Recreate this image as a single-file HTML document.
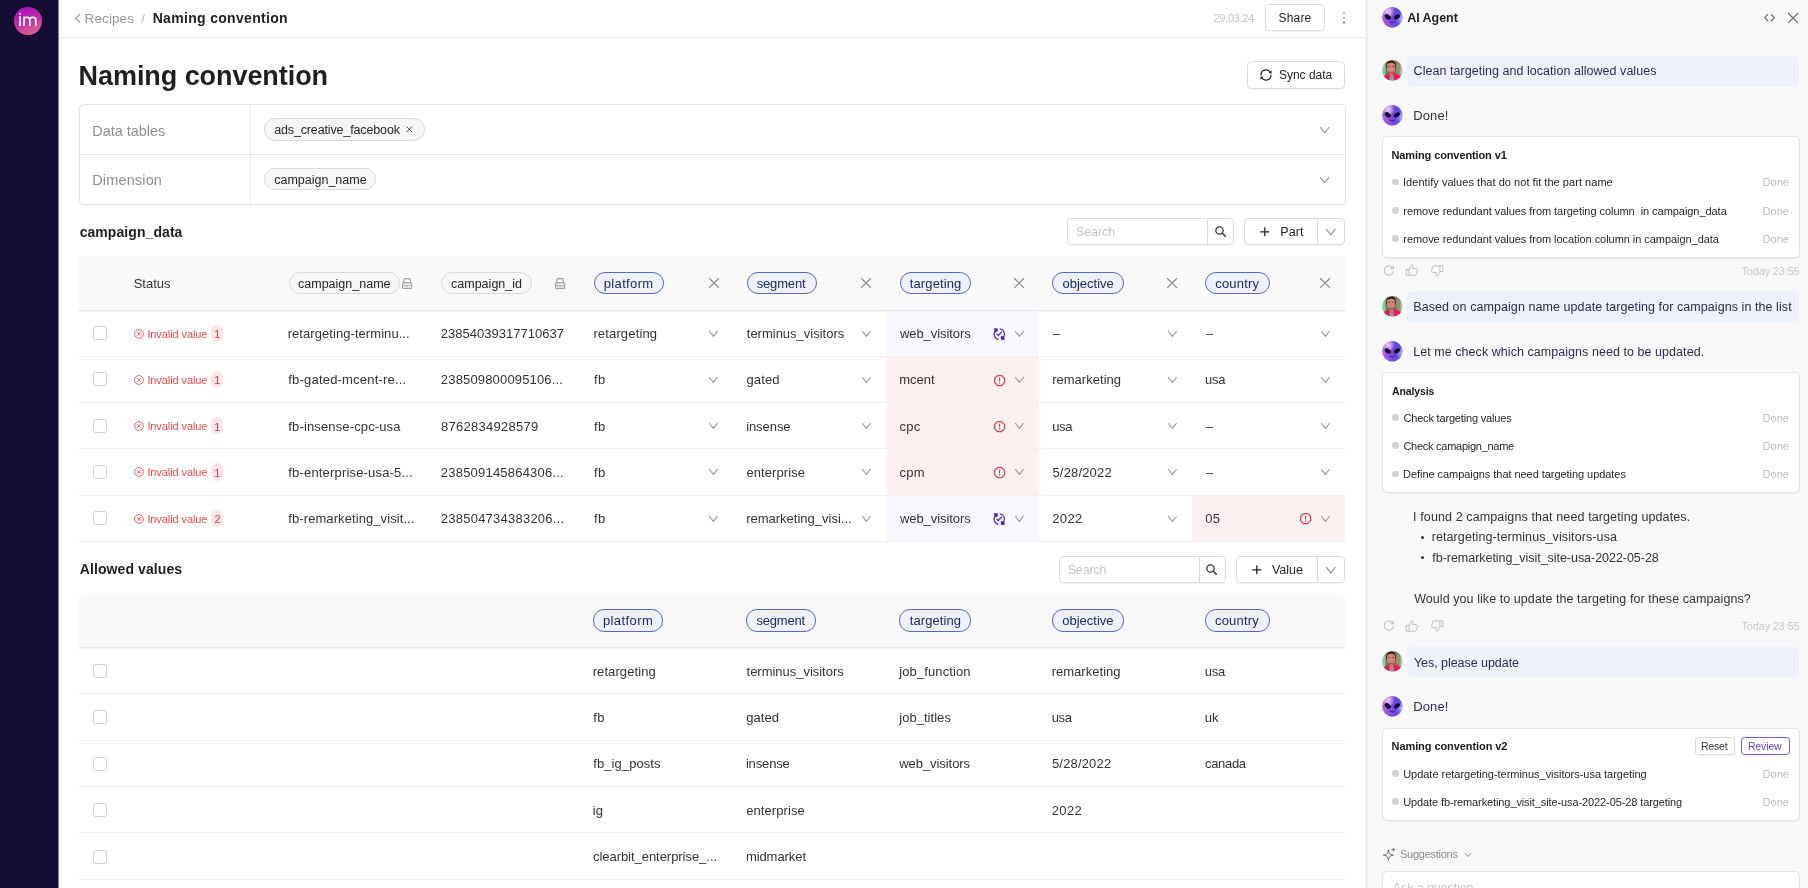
<!DOCTYPE html>
<html>
<head>
<meta charset="utf-8">
<title>Naming convention</title>
<style>
*{box-sizing:border-box;margin:0;padding:0}
html,body{width:1808px;height:888px;overflow:hidden;background:#fff}
body{font-family:"Liberation Sans",sans-serif;color:#1f1f1f;position:relative;font-size:13px;will-change:transform}
.abs{position:absolute}
.t{position:absolute;white-space:pre;line-height:1}
svg{display:block;overflow:visible}
/* sidebar */
#side{left:0;top:0;width:58px;height:888px;background:#150d33;border-right:1px solid #8a869a;width:59px}
#logo{left:13.9px;top:7.1px;width:27.9px;height:27.9px;border-radius:50%;background:linear-gradient(158deg,#aa10c6 0%,#b418b8 25%,#c83a9c 60%,#e87890 100%)}
/* header */
#hdr{left:59px;top:0;width:1306px;height:38px;border-bottom:1px solid #ebebee;background:#fff}
.btn{position:absolute;border:1px solid #dcdcdc;border-radius:4px;background:#fff;box-shadow:0 1px 1px rgba(0,0,0,.04)}
/* config box */
#cfg{left:79px;top:104px;width:1267px;height:101px;border:1px solid #e2e2e2;border-radius:4px;box-shadow:0 1px 2px rgba(0,0,0,.06);background:#fff}
.chipg{position:absolute;height:22px;border:1px solid #d9d9d9;border-radius:11px;background:#f6f6f6}
.chipb{position:absolute;height:22px;border:1.5px solid #5468cf;border-radius:11px;background:#eef1fc}
/* tables */
.thead{position:absolute;left:79px;width:1266px;background:#f9f9f9;border-bottom:1px solid #e9e9e9;box-shadow:0 1px 0 #f3f3f3;border-radius:4px 4px 0 0}
.rowline{position:absolute;left:79px;width:1266px;height:1px;background:#efefef}
.cb{position:absolute;left:93px;width:14px;height:14px;border:1px solid #cfcfcf;border-radius:3px;background:#fff}
.cell{color:#2b2b2b;font-size:13px}
/* panel */
#panel{left:1365px;top:0;width:443px;height:888px;background:linear-gradient(90deg,#f5f5f5 0,#f5f5f5 1px,#e8e8e8 1px,#e8e8e8 2px,#eeeeee 2px,#eeeeee 3px,#f8f8f8 3px)}
.bubble{position:absolute;left:1407px;width:392px;height:30px;border-radius:5px;background:#edf1fb}
.card{position:absolute;left:1382px;width:418px;border:1px solid #e3e3e3;border-radius:5px;background:#fff;box-shadow:0 1px 2px rgba(0,0,0,.05)}
.dot{position:absolute;left:1392px;width:6px;height:6px;border-radius:50%;background:#d4d4d4}
.done{position:absolute;white-space:nowrap;line-height:1;font-size:11px;color:#b5b5b5}
</style>
</head>
<body>
<!-- SIDEBAR -->
<div class="abs" id="side"></div>
<div class="abs" id="logo"></div>
<svg class="abs" style="left:18px;top:12px" width="20" height="15" viewBox="0 0 20 15" fill="none" stroke="#fff" stroke-width="1.65" stroke-linecap="butt"><path d="M2.05 4V13.9"/><circle cx="2.1" cy="1.8" r="1.05" fill="#fff" stroke="none"/><path d="M6.05 4.4V13.9M6.05 7.8C6.05 4.4 11.8 4.4 11.8 7.8V13.9M11.8 7.8C11.8 4.4 17.75 4.4 17.75 7.8V13.9"/></svg>

<!-- HEADER -->
<div class="abs" id="hdr"></div>
<svg class="abs" style="left:75.3px;top:13.6px" width="5.2" height="8.6" viewBox="0 0 5.2 8.6" ><path d="M4.5 0.6L0.8 4.3L4.5 8" fill="none" stroke="#979797" stroke-width="1.15" stroke-linecap="round" stroke-linejoin="round"/></svg>
<div class="t" style="left:84.59px;top:12px;font-size:13.5px;color:#959595;letter-spacing:0.103px;">Recipes</div>
<div class="t" style="left:141.30px;top:12px;font-size:13.5px;color:#b8b8b8;">/</div>
<div class="t" style="left:152.68px;top:11px;font-size:14px;color:#222;font-weight:700;letter-spacing:0.318px;">Naming convention</div>
<div class="t" style="left:1213.45px;top:13px;font-size:11px;color:#c6c6c6;letter-spacing:-0.278px;">29.03.24</div>
<div class="btn" style="left:1265px;top:4px;width:60px;height:27px;"></div>
<div class="t" style="left:1278.46px;top:12px;font-size:12px;color:#1f1f1f;letter-spacing:0.200px;">Share</div>
<div class="abs" style="left:1342.8px;top:11.5px;width:2.3px;height:2.3px;border-radius:50%;background:#9c9c9c"></div>
<div class="abs" style="left:1342.8px;top:16.5px;width:2.3px;height:2.3px;border-radius:50%;background:#9c9c9c"></div>
<div class="abs" style="left:1342.8px;top:21.4px;width:2.3px;height:2.3px;border-radius:50%;background:#9c9c9c"></div>
<div class="t" style="left:78.62px;top:63px;font-size:27px;color:#1f1f1f;font-weight:700;letter-spacing:-0.067px;">Naming convention</div>
<div class="btn" style="left:1247px;top:61px;width:98px;height:28px;"></div>
<svg class="abs" style="left:1259.7px;top:69px" width="12" height="12" viewBox="0 0 12 12" ><g fill="none" stroke="#222" stroke-width="1.2" stroke-linecap="round"><path d="M0.9 6A5.1 5.1 0 0 1 10.4 3.5"/><path d="M11.1 6A5.1 5.1 0 0 1 1.6 8.5"/></g><path d="M11.7 1.5L11.4 4.7L8.5 3.7Z" fill="#222"/><path d="M0.3 10.5L0.6 7.3L3.5 8.3Z" fill="#222"/></svg>
<div class="t" style="left:1278.96px;top:69px;font-size:12px;color:#1f1f1f;letter-spacing:-0.011px;">Sync data</div>
<div class="abs" id="cfg"></div>
<div class="abs" style="left:79.5px;top:154px;width:1266px;height:1px;background:#e6e6e6"></div>
<div class="abs" style="left:250px;top:105px;width:1px;height:99.5px;background:#ececec"></div>
<div class="t" style="left:92.21px;top:124px;font-size:14.5px;color:#8f8f8f;letter-spacing:-0.024px;">Data tables</div>
<div class="t" style="left:92.21px;top:173px;font-size:14.5px;color:#8f8f8f;letter-spacing:0.152px;">Dimension</div>
<div class="chipg" style="left:264.4px;top:118.4px;width:160.4px;height:22.3px;"></div>
<div class="t" style="left:274.18px;top:124px;font-size:12.5px;color:#262626;letter-spacing:-0.138px;">ads_creative_facebook</div>
<svg class="abs" style="left:405.7px;top:126.2px" width="6.6" height="6.6" viewBox="0 0 6.6 6.6" ><path d="M0.6 0.6L6 6M6 0.6L0.6 6" stroke="#444" stroke-width="0.95" fill="none"/></svg>
<div class="chipg" style="left:264.4px;top:168.2px;width:112px;height:22.3px;"></div>
<div class="t" style="left:274.18px;top:174px;font-size:12.5px;color:#262626;letter-spacing:0.005px;">campaign_name</div>
<svg class="abs" style="left:1320px;top:126.6px" width="9.4" height="6.2" viewBox="0 0 9.4 6.2" ><path d="M0.6 0.6L4.7 5.6L8.8 0.6" fill="none" stroke="#959595" stroke-width="1.15" stroke-linecap="round" stroke-linejoin="round"/></svg>
<svg class="abs" style="left:1320px;top:176.6px" width="9.4" height="6.2" viewBox="0 0 9.4 6.2" ><path d="M0.6 0.6L4.7 5.6L8.8 0.6" fill="none" stroke="#959595" stroke-width="1.15" stroke-linecap="round" stroke-linejoin="round"/></svg>

<div class="t" style="left:79.65px;top:225px;font-size:14px;color:#1f1f1f;font-weight:700;letter-spacing:0.069px;">campaign_data</div>
<div class="btn" style="left:1067.4px;top:218.2px;width:166.8px;height:26.8px;"></div><div class="abs" style="left:1207.3px;top:218.7px;width:1px;height:25.8px;background:#dcdcdc"></div><div class="t" style="left:1076.04px;top:226px;font-size:12.5px;color:#c6c6c6;letter-spacing:-0.108px;">Search</div><svg class="abs" style="left:1214.7px;top:226.2px" width="11.2" height="11.2" viewBox="0 0 11.2 11.2" ><circle cx="4.5" cy="4.5" r="3.7" fill="none" stroke="#3a3a3a" stroke-width="1.3"/><path d="M7.3 7.3L10.3 10.3" stroke="#3a3a3a" stroke-width="1.5" stroke-linecap="round"/></svg>
<div class="btn" style="left:1244.3px;top:218.2px;width:100.4px;height:26.8px;"></div><div class="abs" style="left:1317.3px;top:218.7px;width:1px;height:25.8px;background:#dcdcdc"></div><svg class="abs" style="left:1260.3px;top:226.8px" width="9.6" height="9.6" viewBox="0 0 9.6 9.6" ><path d="M4.8 0.3V9.3M0.3 4.8H9.3" stroke="#1f1f1f" stroke-width="1.25" fill="none"/></svg><div class="t" style="left:1280.27px;top:226px;font-size:12.5px;color:#1f1f1f;letter-spacing:0.062px;">Part</div><svg class="abs" style="left:1325.7px;top:228.7px" width="9.6" height="6.4" viewBox="0 0 9.6 6.4" ><path d="M0.5 0.5L4.8 5.9L9.1 0.5" fill="none" stroke="#8c8c8c" stroke-width="1.2" stroke-linecap="round" stroke-linejoin="round"/></svg>
<div class="thead" style="top:256px;height:54.5px"></div>
<div class="t" style="left:133.66px;top:277px;font-size:13px;color:#333;letter-spacing:-0.010px;">Status</div>
<div class="chipg" style="left:288.5px;top:272px;width:111.5px;height:22px;"></div><div class="t" style="left:297.98px;top:278px;font-size:12.5px;color:#262626;letter-spacing:0.014px;">campaign_name</div>
<svg class="abs" style="left:402px;top:277.8px" width="10.2" height="11" viewBox="0 0 10.2 11" ><g fill="none" stroke="#9f9f9f" stroke-width="1" stroke-linejoin="round"><path d="M1.9 4.9V2.2A1.6 1.6 0 0 1 3.5 0.6H6.7A1.6 1.6 0 0 1 8.3 2.2V4.9" stroke-width="1.15"/><rect x="0.55" y="4.9" width="9.1" height="5.5" rx="1" stroke-width="1.1"/><path d="M0.6 7.7H9.6" stroke-width="0.9"/></g><rect x="4.6" y="7.3" width="1" height="1.6" fill="#9f9f9f"/></svg>
<div class="chipg" style="left:441px;top:272px;width:90.75px;height:22px;"></div><div class="t" style="left:450.98px;top:278px;font-size:12.5px;color:#262626;letter-spacing:0.020px;">campaign_id</div>
<svg class="abs" style="left:554.9px;top:277.8px" width="10.2" height="11" viewBox="0 0 10.2 11" ><g fill="none" stroke="#9f9f9f" stroke-width="1" stroke-linejoin="round"><path d="M1.9 4.9V2.2A1.6 1.6 0 0 1 3.5 0.6H6.7A1.6 1.6 0 0 1 8.3 2.2V4.9" stroke-width="1.15"/><rect x="0.55" y="4.9" width="9.1" height="5.5" rx="1" stroke-width="1.1"/><path d="M0.6 7.7H9.6" stroke-width="0.9"/></g><rect x="4.6" y="7.3" width="1" height="1.6" fill="#9f9f9f"/></svg>
<div class="chipb" style="left:593.75px;top:272px;width:70px;height:22.2px;"></div><div class="t" style="left:603.77px;top:277px;font-size:13px;color:#1d2a6b;letter-spacing:0.346px;">platform</div>
<svg class="abs" style="left:708.5px;top:278.1px" width="10.2" height="10.2" viewBox="0 0 10.2 10.2" ><path d="M0.5 0.5L9.7 9.7M9.7 0.5L0.5 9.7" fill="none" stroke="#8a8a8a" stroke-width="1.15" stroke-linecap="round"/></svg>
<div class="chipb" style="left:746.5px;top:272px;width:70.25px;height:22.2px;"></div><div class="t" style="left:756.65px;top:277px;font-size:13px;color:#1d2a6b;letter-spacing:-0.154px;">segment</div>
<svg class="abs" style="left:861.4px;top:278.1px" width="10.2" height="10.2" viewBox="0 0 10.2 10.2" ><path d="M0.5 0.5L9.7 9.7M9.7 0.5L0.5 9.7" fill="none" stroke="#8a8a8a" stroke-width="1.15" stroke-linecap="round"/></svg>
<div class="chipb" style="left:899.5px;top:272px;width:71.5px;height:22.2px;"></div><div class="t" style="left:909.80px;top:277px;font-size:13px;color:#1d2a6b;letter-spacing:0.118px;">targeting</div>
<svg class="abs" style="left:1014.3px;top:278.1px" width="10.2" height="10.2" viewBox="0 0 10.2 10.2" ><path d="M0.5 0.5L9.7 9.7M9.7 0.5L0.5 9.7" fill="none" stroke="#8a8a8a" stroke-width="1.15" stroke-linecap="round"/></svg>
<div class="chipb" style="left:1052.25px;top:272px;width:71.75px;height:22.2px;"></div><div class="t" style="left:1062.45px;top:277px;font-size:13px;color:#1d2a6b;letter-spacing:0.007px;">objective</div>
<svg class="abs" style="left:1166.9px;top:278.1px" width="10.2" height="10.2" viewBox="0 0 10.2 10.2" ><path d="M0.5 0.5L9.7 9.7M9.7 0.5L0.5 9.7" fill="none" stroke="#8a8a8a" stroke-width="1.15" stroke-linecap="round"/></svg>
<div class="chipb" style="left:1205.25px;top:272px;width:64.75px;height:22.2px;"></div><div class="t" style="left:1215.20px;top:277px;font-size:13px;color:#1d2a6b;letter-spacing:0.199px;">country</div>
<svg class="abs" style="left:1319.9px;top:278.1px" width="10.2" height="10.2" viewBox="0 0 10.2 10.2" ><path d="M0.5 0.5L9.7 9.7M9.7 0.5L0.5 9.7" fill="none" stroke="#8a8a8a" stroke-width="1.15" stroke-linecap="round"/></svg>
<div class="abs" style="left:886px;top:310.5px;width:153px;height:46.05px;background:#f8f6fe;"></div>
<div class="abs" style="left:79px;top:356px;width:1266px;height:1px;background:#efefef"></div>
<div class="cb" style="top:326px"></div>
<svg class="abs" style="left:134.3px;top:328.68px" width="9.9" height="9.9" viewBox="0 0 9.9 9.9" ><circle cx="4.95" cy="4.95" r="4.4" fill="none" stroke="#f06468" stroke-width="1"/><path d="M3.35 3.35L6.550000000000001 6.550000000000001M6.550000000000001 3.35L3.35 6.550000000000001" stroke="#f06468" stroke-width="1" fill="none" stroke-linecap="round"/></svg>
<div class="t" style="left:147.39px;top:329px;font-size:11px;color:#ee4a4e;letter-spacing:-0.088px;">Invalid value</div>
<div class="abs" style="left:211px;top:324.52px;width:12px;height:17.3px;border-radius:6px;background:#fde4e5"></div>
<div class="t" style="left:214.16px;top:329px;font-size:11px;color:#cf4049;">1</div>
<div class="t" style="left:287.64px;top:327px;font-size:13px;color:#333333;letter-spacing:0.065px;">retargeting-terminu...</div>
<div class="t" style="left:440.85px;top:327px;font-size:13px;color:#333333;letter-spacing:0.008px;">23854039317710637</div>
<div class="t" style="left:593.39px;top:327px;font-size:13px;color:#333333;letter-spacing:0.154px;">retargeting</div>
<div class="t" style="left:746.80px;top:327px;font-size:13px;color:#333333;letter-spacing:-0.007px;">terminus_visitors</div>
<div class="t" style="left:900.00px;top:327px;font-size:13px;color:#333333;letter-spacing:-0.076px;">web_visitors</div>
<div class="t" style="left:1053.00px;top:327px;font-size:13px;color:#333333;">–</div>
<div class="t" style="left:1205.75px;top:327px;font-size:13px;color:#333333;">–</div>
<svg class="abs" style="left:709.2px;top:330.57px" width="8.8" height="5.9" viewBox="0 0 8.8 5.9" ><path d="M0.5 0.5L4.4 5.4L8.3 0.5" fill="none" stroke="#9a9a9a" stroke-width="1.2" stroke-linecap="round" stroke-linejoin="round"/></svg>
<svg class="abs" style="left:861.9px;top:330.57px" width="8.8" height="5.9" viewBox="0 0 8.8 5.9" ><path d="M0.5 0.5L4.4 5.4L8.3 0.5" fill="none" stroke="#9a9a9a" stroke-width="1.2" stroke-linecap="round" stroke-linejoin="round"/></svg>
<svg class="abs" style="left:1014.9px;top:330.57px" width="8.8" height="5.9" viewBox="0 0 8.8 5.9" ><path d="M0.5 0.5L4.4 5.4L8.3 0.5" fill="none" stroke="#9a9a9a" stroke-width="1.2" stroke-linecap="round" stroke-linejoin="round"/></svg>
<svg class="abs" style="left:1167.6px;top:330.57px" width="8.8" height="5.9" viewBox="0 0 8.8 5.9" ><path d="M0.5 0.5L4.4 5.4L8.3 0.5" fill="none" stroke="#9a9a9a" stroke-width="1.2" stroke-linecap="round" stroke-linejoin="round"/></svg>
<svg class="abs" style="left:1320.6px;top:330.57px" width="8.8" height="5.9" viewBox="0 0 8.8 5.9" ><path d="M0.5 0.5L4.4 5.4L8.3 0.5" fill="none" stroke="#9a9a9a" stroke-width="1.2" stroke-linecap="round" stroke-linejoin="round"/></svg>
<svg class="abs" style="left:993.35px;top:327.72px" width="12.7" height="12.2" viewBox="0 0 12.7 12.2" ><g fill="none" stroke="#5a34b8" stroke-width="1.3" stroke-linecap="round" stroke-linejoin="round"><path d="M1.96 3.3A5.3 5.3 0 0 0 4.93 11.3"/><path d="M7.22 0.9A5.3 5.3 0 0 1 10.2 9.6"/><path d="M3.9 6.2L5.4 7.5L8.5 4.2" stroke-width="1.35"/></g><path d="M1.2 0.5L4.7 0.8L4.3 3.3L1.9 3.9Z" fill="#4a1fa6" stroke="#4a1fa6" stroke-width="0.5" stroke-linejoin="round"/><path d="M8 8.6L10.6 8.3L11.6 11.4L8.2 11.7Z" fill="#4a1fa6" stroke="#4a1fa6" stroke-width="0.5" stroke-linejoin="round"/></svg>
<div class="abs" style="left:886px;top:356.75px;width:153px;height:46.05px;background:#fdf0f0;"></div>
<div class="abs" style="left:79px;top:402px;width:1266px;height:1px;background:#efefef"></div>
<div class="cb" style="top:372px"></div>
<svg class="abs" style="left:134.3px;top:374.93px" width="9.9" height="9.9" viewBox="0 0 9.9 9.9" ><circle cx="4.95" cy="4.95" r="4.4" fill="none" stroke="#f06468" stroke-width="1"/><path d="M3.35 3.35L6.550000000000001 6.550000000000001M6.550000000000001 3.35L3.35 6.550000000000001" stroke="#f06468" stroke-width="1" fill="none" stroke-linecap="round"/></svg>
<div class="t" style="left:147.39px;top:375px;font-size:11px;color:#ee4a4e;letter-spacing:-0.088px;">Invalid value</div>
<div class="abs" style="left:211px;top:370.77px;width:12px;height:17.3px;border-radius:6px;background:#fde4e5"></div>
<div class="t" style="left:214.16px;top:375px;font-size:11px;color:#cf4049;">1</div>
<div class="t" style="left:288.32px;top:373px;font-size:13px;color:#333333;letter-spacing:0.195px;">fb-gated-mcent-re...</div>
<div class="t" style="left:440.85px;top:373px;font-size:13px;color:#333333;letter-spacing:0.164px;">238509800095106...</div>
<div class="t" style="left:594.07px;top:373px;font-size:13px;color:#333333;letter-spacing:0.300px;">fb</div>
<div class="t" style="left:746.45px;top:373px;font-size:13px;color:#333333;letter-spacing:0.150px;">gated</div>
<div class="t" style="left:899.14px;top:373px;font-size:13px;color:#333333;letter-spacing:0.012px;">mcent</div>
<div class="t" style="left:1052.14px;top:373px;font-size:13px;color:#333333;letter-spacing:0.030px;">remarketing</div>
<div class="t" style="left:1204.92px;top:373px;font-size:13px;color:#333333;letter-spacing:-0.194px;">usa</div>
<svg class="abs" style="left:709.2px;top:376.82px" width="8.8" height="5.9" viewBox="0 0 8.8 5.9" ><path d="M0.5 0.5L4.4 5.4L8.3 0.5" fill="none" stroke="#9a9a9a" stroke-width="1.2" stroke-linecap="round" stroke-linejoin="round"/></svg>
<svg class="abs" style="left:861.9px;top:376.82px" width="8.8" height="5.9" viewBox="0 0 8.8 5.9" ><path d="M0.5 0.5L4.4 5.4L8.3 0.5" fill="none" stroke="#9a9a9a" stroke-width="1.2" stroke-linecap="round" stroke-linejoin="round"/></svg>
<svg class="abs" style="left:1014.9px;top:376.82px" width="8.8" height="5.9" viewBox="0 0 8.8 5.9" ><path d="M0.5 0.5L4.4 5.4L8.3 0.5" fill="none" stroke="#9a9a9a" stroke-width="1.2" stroke-linecap="round" stroke-linejoin="round"/></svg>
<svg class="abs" style="left:1167.6px;top:376.82px" width="8.8" height="5.9" viewBox="0 0 8.8 5.9" ><path d="M0.5 0.5L4.4 5.4L8.3 0.5" fill="none" stroke="#9a9a9a" stroke-width="1.2" stroke-linecap="round" stroke-linejoin="round"/></svg>
<svg class="abs" style="left:1320.6px;top:376.82px" width="8.8" height="5.9" viewBox="0 0 8.8 5.9" ><path d="M0.5 0.5L4.4 5.4L8.3 0.5" fill="none" stroke="#9a9a9a" stroke-width="1.2" stroke-linecap="round" stroke-linejoin="round"/></svg>
<svg class="abs" style="left:994.0px;top:374.67px" width="11.2" height="11.2" viewBox="0 0 11.2 11.2" ><polygon points="10.55,7.65 7.65,10.55 3.55,10.55 0.65,7.65 0.65,3.55 3.55,0.65 7.65,0.65 10.55,3.55" fill="#fff" fill-opacity="0.55" stroke="#de3f46" stroke-width="1.25" stroke-linejoin="round"/><path d="M5.6 3.0999999999999996V6.0" stroke="#de3f46" stroke-width="1.15" fill="none" stroke-linecap="round"/><circle cx="5.6" cy="8.05" r="0.72" fill="#de3f46"/></svg>
<div class="abs" style="left:886px;top:403.0px;width:153px;height:46.05px;background:#fdf0f0;"></div>
<div class="abs" style="left:79px;top:448px;width:1266px;height:1px;background:#efefef"></div>
<div class="cb" style="top:419px"></div>
<svg class="abs" style="left:134.3px;top:421.18px" width="9.9" height="9.9" viewBox="0 0 9.9 9.9" ><circle cx="4.95" cy="4.95" r="4.4" fill="none" stroke="#f06468" stroke-width="1"/><path d="M3.35 3.35L6.550000000000001 6.550000000000001M6.550000000000001 3.35L3.35 6.550000000000001" stroke="#f06468" stroke-width="1" fill="none" stroke-linecap="round"/></svg>
<div class="t" style="left:147.39px;top:421px;font-size:11px;color:#ee4a4e;letter-spacing:-0.088px;">Invalid value</div>
<div class="abs" style="left:211px;top:417.02px;width:12px;height:17.3px;border-radius:6px;background:#fde4e5"></div>
<div class="t" style="left:214.16px;top:422px;font-size:11px;color:#cf4049;">1</div>
<div class="t" style="left:288.32px;top:420px;font-size:13px;color:#333333;letter-spacing:0.138px;">fb-insense-cpc-usa</div>
<div class="t" style="left:440.94px;top:420px;font-size:13px;color:#333333;letter-spacing:0.265px;">8762834928579</div>
<div class="t" style="left:594.07px;top:420px;font-size:13px;color:#333333;letter-spacing:0.300px;">fb</div>
<div class="t" style="left:746.14px;top:420px;font-size:13px;color:#333333;letter-spacing:-0.064px;">insense</div>
<div class="t" style="left:899.45px;top:420px;font-size:13px;color:#333333;letter-spacing:0.300px;">cpc</div>
<div class="t" style="left:1052.17px;top:420px;font-size:13px;color:#333333;letter-spacing:-0.300px;">usa</div>
<div class="t" style="left:1205.75px;top:420px;font-size:13px;color:#333333;">–</div>
<svg class="abs" style="left:709.2px;top:423.07px" width="8.8" height="5.9" viewBox="0 0 8.8 5.9" ><path d="M0.5 0.5L4.4 5.4L8.3 0.5" fill="none" stroke="#9a9a9a" stroke-width="1.2" stroke-linecap="round" stroke-linejoin="round"/></svg>
<svg class="abs" style="left:861.9px;top:423.07px" width="8.8" height="5.9" viewBox="0 0 8.8 5.9" ><path d="M0.5 0.5L4.4 5.4L8.3 0.5" fill="none" stroke="#9a9a9a" stroke-width="1.2" stroke-linecap="round" stroke-linejoin="round"/></svg>
<svg class="abs" style="left:1014.9px;top:423.07px" width="8.8" height="5.9" viewBox="0 0 8.8 5.9" ><path d="M0.5 0.5L4.4 5.4L8.3 0.5" fill="none" stroke="#9a9a9a" stroke-width="1.2" stroke-linecap="round" stroke-linejoin="round"/></svg>
<svg class="abs" style="left:1167.6px;top:423.07px" width="8.8" height="5.9" viewBox="0 0 8.8 5.9" ><path d="M0.5 0.5L4.4 5.4L8.3 0.5" fill="none" stroke="#9a9a9a" stroke-width="1.2" stroke-linecap="round" stroke-linejoin="round"/></svg>
<svg class="abs" style="left:1320.6px;top:423.07px" width="8.8" height="5.9" viewBox="0 0 8.8 5.9" ><path d="M0.5 0.5L4.4 5.4L8.3 0.5" fill="none" stroke="#9a9a9a" stroke-width="1.2" stroke-linecap="round" stroke-linejoin="round"/></svg>
<svg class="abs" style="left:994.0px;top:420.92px" width="11.2" height="11.2" viewBox="0 0 11.2 11.2" ><polygon points="10.55,7.65 7.65,10.55 3.55,10.55 0.65,7.65 0.65,3.55 3.55,0.65 7.65,0.65 10.55,3.55" fill="#fff" fill-opacity="0.55" stroke="#de3f46" stroke-width="1.25" stroke-linejoin="round"/><path d="M5.6 3.0999999999999996V6.0" stroke="#de3f46" stroke-width="1.15" fill="none" stroke-linecap="round"/><circle cx="5.6" cy="8.05" r="0.72" fill="#de3f46"/></svg>
<div class="abs" style="left:886px;top:449.25px;width:153px;height:46.05px;background:#fdf0f0;"></div>
<div class="abs" style="left:79px;top:495px;width:1266px;height:1px;background:#efefef"></div>
<div class="cb" style="top:465px"></div>
<svg class="abs" style="left:134.3px;top:467.43px" width="9.9" height="9.9" viewBox="0 0 9.9 9.9" ><circle cx="4.95" cy="4.95" r="4.4" fill="none" stroke="#f06468" stroke-width="1"/><path d="M3.35 3.35L6.550000000000001 6.550000000000001M6.550000000000001 3.35L3.35 6.550000000000001" stroke="#f06468" stroke-width="1" fill="none" stroke-linecap="round"/></svg>
<div class="t" style="left:147.39px;top:467px;font-size:11px;color:#ee4a4e;letter-spacing:-0.088px;">Invalid value</div>
<div class="abs" style="left:211px;top:463.27px;width:12px;height:17.3px;border-radius:6px;background:#fde4e5"></div>
<div class="t" style="left:214.16px;top:468px;font-size:11px;color:#cf4049;">1</div>
<div class="t" style="left:288.32px;top:466px;font-size:13px;color:#333333;letter-spacing:0.176px;">fb-enterprise-usa-5...</div>
<div class="t" style="left:440.85px;top:466px;font-size:13px;color:#333333;letter-spacing:0.209px;">238509145864306...</div>
<div class="t" style="left:594.07px;top:466px;font-size:13px;color:#333333;letter-spacing:0.300px;">fb</div>
<div class="t" style="left:746.45px;top:466px;font-size:13px;color:#333333;letter-spacing:0.090px;">enterprise</div>
<div class="t" style="left:899.45px;top:466px;font-size:13px;color:#333333;letter-spacing:0.300px;">cpm</div>
<div class="t" style="left:1052.48px;top:466px;font-size:13px;color:#333333;letter-spacing:0.167px;">5/28/2022</div>
<div class="t" style="left:1205.75px;top:466px;font-size:13px;color:#333333;">–</div>
<svg class="abs" style="left:709.2px;top:469.32px" width="8.8" height="5.9" viewBox="0 0 8.8 5.9" ><path d="M0.5 0.5L4.4 5.4L8.3 0.5" fill="none" stroke="#9a9a9a" stroke-width="1.2" stroke-linecap="round" stroke-linejoin="round"/></svg>
<svg class="abs" style="left:861.9px;top:469.32px" width="8.8" height="5.9" viewBox="0 0 8.8 5.9" ><path d="M0.5 0.5L4.4 5.4L8.3 0.5" fill="none" stroke="#9a9a9a" stroke-width="1.2" stroke-linecap="round" stroke-linejoin="round"/></svg>
<svg class="abs" style="left:1014.9px;top:469.32px" width="8.8" height="5.9" viewBox="0 0 8.8 5.9" ><path d="M0.5 0.5L4.4 5.4L8.3 0.5" fill="none" stroke="#9a9a9a" stroke-width="1.2" stroke-linecap="round" stroke-linejoin="round"/></svg>
<svg class="abs" style="left:1167.6px;top:469.32px" width="8.8" height="5.9" viewBox="0 0 8.8 5.9" ><path d="M0.5 0.5L4.4 5.4L8.3 0.5" fill="none" stroke="#9a9a9a" stroke-width="1.2" stroke-linecap="round" stroke-linejoin="round"/></svg>
<svg class="abs" style="left:1320.6px;top:469.32px" width="8.8" height="5.9" viewBox="0 0 8.8 5.9" ><path d="M0.5 0.5L4.4 5.4L8.3 0.5" fill="none" stroke="#9a9a9a" stroke-width="1.2" stroke-linecap="round" stroke-linejoin="round"/></svg>
<svg class="abs" style="left:994.0px;top:467.17px" width="11.2" height="11.2" viewBox="0 0 11.2 11.2" ><polygon points="10.55,7.65 7.65,10.55 3.55,10.55 0.65,7.65 0.65,3.55 3.55,0.65 7.65,0.65 10.55,3.55" fill="#fff" fill-opacity="0.55" stroke="#de3f46" stroke-width="1.25" stroke-linejoin="round"/><path d="M5.6 3.0999999999999996V6.0" stroke="#de3f46" stroke-width="1.15" fill="none" stroke-linecap="round"/><circle cx="5.6" cy="8.05" r="0.72" fill="#de3f46"/></svg>
<div class="abs" style="left:886px;top:495.5px;width:153px;height:46.05px;background:#f8f6fe;"></div>
<div class="abs" style="left:1192px;top:495.5px;width:152.8px;height:46.05px;background:#fdf0f0;border-radius:0 0 4px 0;"></div>
<div class="abs" style="left:79px;top:541px;width:1266px;height:1px;background:#efefef"></div>
<div class="cb" style="top:511px"></div>
<svg class="abs" style="left:134.3px;top:513.67px" width="9.9" height="9.9" viewBox="0 0 9.9 9.9" ><circle cx="4.95" cy="4.95" r="4.4" fill="none" stroke="#f06468" stroke-width="1"/><path d="M3.35 3.35L6.550000000000001 6.550000000000001M6.550000000000001 3.35L3.35 6.550000000000001" stroke="#f06468" stroke-width="1" fill="none" stroke-linecap="round"/></svg>
<div class="t" style="left:147.39px;top:514px;font-size:11px;color:#ee4a4e;letter-spacing:-0.088px;">Invalid value</div>
<div class="abs" style="left:211px;top:509.52px;width:12px;height:17.3px;border-radius:6px;background:#fde4e5"></div>
<div class="t" style="left:214.45px;top:514px;font-size:11px;color:#cf4049;">2</div>
<div class="t" style="left:288.32px;top:512px;font-size:13px;color:#333333;letter-spacing:0.082px;">fb-remarketing_visit...</div>
<div class="t" style="left:440.85px;top:512px;font-size:13px;color:#333333;letter-spacing:0.232px;">238504734383206...</div>
<div class="t" style="left:594.07px;top:512px;font-size:13px;color:#333333;letter-spacing:0.300px;">fb</div>
<div class="t" style="left:746.14px;top:512px;font-size:13px;color:#333333;">remarketing_visi...</div>
<div class="t" style="left:900.00px;top:512px;font-size:13px;color:#333333;letter-spacing:-0.076px;">web_visitors</div>
<div class="t" style="left:1052.35px;top:512px;font-size:13px;color:#333333;letter-spacing:0.296px;">2022</div>
<div class="t" style="left:1205.24px;top:512px;font-size:13px;color:#333333;letter-spacing:0.300px;">05</div>
<svg class="abs" style="left:709.2px;top:515.57px" width="8.8" height="5.9" viewBox="0 0 8.8 5.9" ><path d="M0.5 0.5L4.4 5.4L8.3 0.5" fill="none" stroke="#9a9a9a" stroke-width="1.2" stroke-linecap="round" stroke-linejoin="round"/></svg>
<svg class="abs" style="left:861.9px;top:515.57px" width="8.8" height="5.9" viewBox="0 0 8.8 5.9" ><path d="M0.5 0.5L4.4 5.4L8.3 0.5" fill="none" stroke="#9a9a9a" stroke-width="1.2" stroke-linecap="round" stroke-linejoin="round"/></svg>
<svg class="abs" style="left:1014.9px;top:515.57px" width="8.8" height="5.9" viewBox="0 0 8.8 5.9" ><path d="M0.5 0.5L4.4 5.4L8.3 0.5" fill="none" stroke="#9a9a9a" stroke-width="1.2" stroke-linecap="round" stroke-linejoin="round"/></svg>
<svg class="abs" style="left:1167.6px;top:515.57px" width="8.8" height="5.9" viewBox="0 0 8.8 5.9" ><path d="M0.5 0.5L4.4 5.4L8.3 0.5" fill="none" stroke="#9a9a9a" stroke-width="1.2" stroke-linecap="round" stroke-linejoin="round"/></svg>
<svg class="abs" style="left:1320.6px;top:515.57px" width="8.8" height="5.9" viewBox="0 0 8.8 5.9" ><path d="M0.5 0.5L4.4 5.4L8.3 0.5" fill="none" stroke="#9a9a9a" stroke-width="1.2" stroke-linecap="round" stroke-linejoin="round"/></svg>
<svg class="abs" style="left:993.35px;top:512.73px" width="12.7" height="12.2" viewBox="0 0 12.7 12.2" ><g fill="none" stroke="#5a34b8" stroke-width="1.3" stroke-linecap="round" stroke-linejoin="round"><path d="M1.96 3.3A5.3 5.3 0 0 0 4.93 11.3"/><path d="M7.22 0.9A5.3 5.3 0 0 1 10.2 9.6"/><path d="M3.9 6.2L5.4 7.5L8.5 4.2" stroke-width="1.35"/></g><path d="M1.2 0.5L4.7 0.8L4.3 3.3L1.9 3.9Z" fill="#4a1fa6" stroke="#4a1fa6" stroke-width="0.5" stroke-linejoin="round"/><path d="M8 8.6L10.6 8.3L11.6 11.4L8.2 11.7Z" fill="#4a1fa6" stroke="#4a1fa6" stroke-width="0.5" stroke-linejoin="round"/></svg>
<svg class="abs" style="left:1299.7px;top:513.42px" width="11.2" height="11.2" viewBox="0 0 11.2 11.2" ><polygon points="10.55,7.65 7.65,10.55 3.55,10.55 0.65,7.65 0.65,3.55 3.55,0.65 7.65,0.65 10.55,3.55" fill="#fff" fill-opacity="0.55" stroke="#de3f46" stroke-width="1.25" stroke-linejoin="round"/><path d="M5.6 3.0999999999999996V6.0" stroke="#de3f46" stroke-width="1.15" fill="none" stroke-linecap="round"/><circle cx="5.6" cy="8.05" r="0.72" fill="#de3f46"/></svg>
<div class="t" style="left:79.76px;top:562px;font-size:14px;color:#1f1f1f;font-weight:700;letter-spacing:0.089px;">Allowed values</div>
<div class="btn" style="left:1059px;top:556.2px;width:166.6px;height:26.8px;"></div><div class="abs" style="left:1198.5px;top:556.7px;width:1px;height:25.8px;background:#dcdcdc"></div><div class="t" style="left:1067.69px;top:564px;font-size:12.5px;color:#c6c6c6;letter-spacing:-0.168px;">Search</div><svg class="abs" style="left:1206.4px;top:564.0px" width="11.2" height="11.2" viewBox="0 0 11.2 11.2" ><circle cx="4.5" cy="4.5" r="3.7" fill="none" stroke="#3a3a3a" stroke-width="1.3"/><path d="M7.3 7.3L10.3 10.3" stroke="#3a3a3a" stroke-width="1.5" stroke-linecap="round"/></svg>
<div class="btn" style="left:1236.25px;top:556.2px;width:108.25px;height:26.8px;"></div><div class="abs" style="left:1317px;top:556.7px;width:1px;height:25.8px;background:#dcdcdc"></div><svg class="abs" style="left:1251.95px;top:564.7px" width="9.6" height="9.6" viewBox="0 0 9.6 9.6" ><path d="M4.8 0.3V9.3M0.3 4.8H9.3" stroke="#1f1f1f" stroke-width="1.25" fill="none"/></svg><div class="t" style="left:1271.95px;top:564px;font-size:12.5px;color:#1f1f1f;letter-spacing:0.016px;">Value</div><svg class="abs" style="left:1325.8px;top:566.6px" width="9.6" height="6.4" viewBox="0 0 9.6 6.4" ><path d="M0.5 0.5L4.8 5.9L9.1 0.5" fill="none" stroke="#8c8c8c" stroke-width="1.2" stroke-linecap="round" stroke-linejoin="round"/></svg>
<div class="thead" style="top:593px;height:54.5px"></div>
<div class="chipb" style="left:593px;top:609.4px;width:69.75px;height:22.2px;"></div><div class="t" style="left:602.92px;top:614px;font-size:13px;color:#1d2a6b;letter-spacing:0.424px;">platform</div>
<div class="chipb" style="left:746px;top:609.4px;width:70px;height:22.2px;"></div><div class="t" style="left:756.40px;top:614px;font-size:13px;color:#1d2a6b;letter-spacing:-0.171px;">segment</div>
<div class="chipb" style="left:899px;top:609.4px;width:71.5px;height:22.2px;"></div><div class="t" style="left:909.80px;top:614px;font-size:13px;color:#1d2a6b;letter-spacing:0.081px;">targeting</div>
<div class="chipb" style="left:1052px;top:609.4px;width:71.5px;height:22.2px;"></div><div class="t" style="left:1062.20px;top:614px;font-size:13px;color:#1d2a6b;letter-spacing:0.007px;">objective</div>
<div class="chipb" style="left:1205.25px;top:609.4px;width:64.5px;height:22.2px;"></div><div class="t" style="left:1214.95px;top:614px;font-size:13px;color:#1d2a6b;letter-spacing:0.199px;">country</div>
<div class="abs" style="left:79px;top:693px;width:1266px;height:1px;background:#efefef"></div>
<div class="cb" style="top:664px"></div>
<div class="t" style="left:592.64px;top:665px;font-size:13px;color:#333333;letter-spacing:0.104px;">retargeting</div>
<div class="t" style="left:746.55px;top:665px;font-size:13px;color:#333333;letter-spacing:-0.023px;">terminus_visitors</div>
<div class="t" style="left:899.25px;top:665px;font-size:13px;color:#333333;letter-spacing:0.104px;">job_function</div>
<div class="t" style="left:1051.64px;top:665px;font-size:13px;color:#333333;letter-spacing:0.030px;">remarketing</div>
<div class="t" style="left:1204.67px;top:665px;font-size:13px;color:#333333;letter-spacing:-0.194px;">usa</div>
<div class="abs" style="left:79px;top:740px;width:1266px;height:1px;background:#efefef"></div>
<div class="cb" style="top:710px"></div>
<div class="t" style="left:593.32px;top:711px;font-size:13px;color:#333333;letter-spacing:0.300px;">fb</div>
<div class="t" style="left:746.20px;top:711px;font-size:13px;color:#333333;letter-spacing:0.088px;">gated</div>
<div class="t" style="left:899.25px;top:711px;font-size:13px;color:#333333;letter-spacing:0.037px;">job_titles</div>
<div class="t" style="left:1051.67px;top:711px;font-size:13px;color:#333333;letter-spacing:-0.300px;">usa</div>
<div class="t" style="left:1204.67px;top:711px;font-size:13px;color:#333333;letter-spacing:0.078px;">uk</div>
<div class="abs" style="left:79px;top:786px;width:1266px;height:1px;background:#efefef"></div>
<div class="cb" style="top:757px"></div>
<div class="t" style="left:593.32px;top:757px;font-size:13px;color:#333333;letter-spacing:0.066px;">fb_ig_posts</div>
<div class="t" style="left:745.89px;top:757px;font-size:13px;color:#333333;letter-spacing:-0.147px;">insense</div>
<div class="t" style="left:899.25px;top:757px;font-size:13px;color:#333333;letter-spacing:-0.062px;">web_visitors</div>
<div class="t" style="left:1051.98px;top:757px;font-size:13px;color:#333333;letter-spacing:0.167px;">5/28/2022</div>
<div class="t" style="left:1204.95px;top:757px;font-size:13px;color:#333333;letter-spacing:-0.304px;">canada</div>
<div class="abs" style="left:79px;top:832px;width:1266px;height:1px;background:#efefef"></div>
<div class="cb" style="top:803px"></div>
<div class="t" style="left:592.64px;top:804px;font-size:13px;color:#333333;letter-spacing:0.300px;">ig</div>
<div class="t" style="left:746.20px;top:804px;font-size:13px;color:#333333;letter-spacing:0.090px;">enterprise</div>
<div class="t" style="left:1051.85px;top:804px;font-size:13px;color:#333333;letter-spacing:0.296px;">2022</div>
<div class="abs" style="left:79px;top:879px;width:1266px;height:1px;background:#efefef"></div>
<div class="cb" style="top:850px"></div>
<div class="t" style="left:592.95px;top:850px;font-size:13px;color:#333333;letter-spacing:-0.040px;">clearbit_enterprise_...</div>
<div class="t" style="left:745.89px;top:850px;font-size:13px;color:#333333;letter-spacing:-0.067px;">midmarket</div>

<!-- PANEL -->
<div class="abs" id="panel"></div>
<svg class="abs" style="left:1381.6px;top:7.1px" width="20.6" height="20.6" viewBox="0 0 20.6 20.6" ><defs><linearGradient id="a1g" x1="0" y1="0.35" x2="1" y2="0.55"><stop offset="0" stop-color="#b565e8"/><stop offset="0.4" stop-color="#9b55df"/><stop offset="0.56" stop-color="#6846d4"/><stop offset="0.82" stop-color="#5a4bd8"/><stop offset="1" stop-color="#8585f2"/></linearGradient><radialGradient id="a1h" cx="0.3" cy="0.2" r="0.32"><stop offset="0" stop-color="#fff" stop-opacity="0.75"/><stop offset="1" stop-color="#fff" stop-opacity="0"/></radialGradient><radialGradient id="a1r" cx="0.93" cy="0.58" r="0.28"><stop offset="0" stop-color="#b0b0ff" stop-opacity="0.9"/><stop offset="1" stop-color="#9a9aff" stop-opacity="0"/></radialGradient><radialGradient id="a1b" cx="0.45" cy="1" r="0.5"><stop offset="0" stop-color="#8a4fe0" stop-opacity="0.9"/><stop offset="1" stop-color="#8a4fe0" stop-opacity="0"/></radialGradient></defs><circle cx="10.3" cy="10.3" r="10.2" fill="url(#a1g)"/><circle cx="10.3" cy="10.3" r="10.2" fill="url(#a1b)"/><circle cx="10.3" cy="10.3" r="10.2" fill="url(#a1r)"/><circle cx="10.3" cy="10.3" r="10.2" fill="url(#a1h)"/><ellipse cx="5.8" cy="9.9" rx="3.5" ry="2.25" transform="rotate(38 5.8 9.9)" fill="#14052f"/><ellipse cx="15" cy="9.9" rx="3.3" ry="2.05" transform="rotate(-38 15 9.9)" fill="#14052f"/><ellipse cx="7.7" cy="7.9" rx="0.9" ry="0.6" transform="rotate(38 7.7 7.9)" fill="#fff" opacity="0.85"/><path d="M7.3 14.9Q10.3 17.6 13.2 14.9Q10.3 16 7.3 14.9Z" fill="#4a1788" stroke="#4a1788" stroke-width="0.5" stroke-linejoin="round"/></svg>
<div class="t" style="left:1407.20px;top:12px;font-size:12.5px;color:#1f1f1f;font-weight:700;letter-spacing:-0.032px;">AI Agent</div>
<svg class="abs" style="left:1763.5px;top:14.1px" width="11" height="7.4" viewBox="0 0 11 7.4" ><path d="M3.6 0.6L0.7 3.7L3.6 6.8M7.4 0.6L10.3 3.7L7.4 6.8" fill="none" stroke="#6a6a6a" stroke-width="1.25" stroke-linecap="round" stroke-linejoin="round"/></svg>
<svg class="abs" style="left:1788px;top:12.6px" width="10.2" height="10.2" viewBox="0 0 10.2 10.2" ><path d="M0.5 0.5L9.7 9.7M9.7 0.5L0.5 9.7" fill="none" stroke="#6a6a6a" stroke-width="1.2" stroke-linecap="round"/></svg>
<svg class="abs" style="left:1381.5px;top:60.0px" width="20.8" height="20.8" viewBox="0 0 20.6 20.6" ><defs><clipPath id="v2c"><circle cx="10.3" cy="10.3" r="10.3"/></clipPath><filter id="v2f" x="-10%" y="-10%" width="120%" height="120%"><feGaussianBlur stdDeviation="0.38"/></filter><linearGradient id="v2bg" x1="0" y1="0" x2="1" y2="0"><stop offset="0" stop-color="#86dca6"/><stop offset="0.18" stop-color="#7fcf9c"/><stop offset="0.27" stop-color="#6c7358"/><stop offset="0.66" stop-color="#74775a"/><stop offset="0.8" stop-color="#98987c"/><stop offset="0.9" stop-color="#d8d8cc"/><stop offset="1" stop-color="#b8b8a8"/></linearGradient></defs><g clip-path="url(#v2c)"><g filter="url(#v2f)"><rect x="-2" y="-2" width="24.6" height="24.6" fill="url(#v2bg)"/><rect x="14.2" y="3.5" width="2" height="9" fill="#a8a878" opacity="0.6"/><path d="M4.3 8.5C3.6 2.4 6.8 0.4 9.1 0.5C12 0.4 14.2 2.2 13.5 8.5Z" fill="#33221f"/><path d="M4.9 6.2C4.9 3.5 6.7 2.7 9 2.7C11.5 2.7 13.1 3.6 13 6.4C13 9.8 12.6 11.8 11.4 13.1C10.1 14.4 7.8 14.4 6.6 13.1C5.3 11.7 4.9 9.4 4.9 6.2Z" fill="#d6857b"/><path d="M5.4 10.8C6.4 11.9 11.4 12 12.6 10.8C12.3 13 10.8 14.5 8.9 14.5C7.1 14.5 5.8 13 5.4 10.8Z" fill="#8a4f45" opacity="0.7"/><path d="M5.6 6.4H8.2M9.9 6.4H12.5" stroke="#54302b" stroke-width="0.9" opacity="0.7"/><rect x="7" y="13.2" width="4.4" height="3" fill="#c7776c"/><path d="M6.6 15.2L9.2 16.2L11.8 15.2L12.4 21H6.4Z" fill="#9c9295"/><path d="M-1 16.9L7.8 13.3L6.8 22H-1Z" fill="#e3134c"/><path d="M21.6 16.9L11.2 13L12.2 22H21.6Z" fill="#f0145a"/></g></g></svg>
<div class="bubble" style="top:55.5px;height:30.3px"></div>
<div class="t" style="left:1413.62px;top:65px;font-size:12.5px;color:#2f2a58;letter-spacing:0.040px;">Clean targeting and location allowed values</div>
<svg class="abs" style="left:1381.6px;top:105.0px" width="20.6" height="20.6" viewBox="0 0 20.6 20.6" ><defs><linearGradient id="a3g" x1="0" y1="0.35" x2="1" y2="0.55"><stop offset="0" stop-color="#b565e8"/><stop offset="0.4" stop-color="#9b55df"/><stop offset="0.56" stop-color="#6846d4"/><stop offset="0.82" stop-color="#5a4bd8"/><stop offset="1" stop-color="#8585f2"/></linearGradient><radialGradient id="a3h" cx="0.3" cy="0.2" r="0.32"><stop offset="0" stop-color="#fff" stop-opacity="0.75"/><stop offset="1" stop-color="#fff" stop-opacity="0"/></radialGradient><radialGradient id="a3r" cx="0.93" cy="0.58" r="0.28"><stop offset="0" stop-color="#b0b0ff" stop-opacity="0.9"/><stop offset="1" stop-color="#9a9aff" stop-opacity="0"/></radialGradient><radialGradient id="a3b" cx="0.45" cy="1" r="0.5"><stop offset="0" stop-color="#8a4fe0" stop-opacity="0.9"/><stop offset="1" stop-color="#8a4fe0" stop-opacity="0"/></radialGradient></defs><circle cx="10.3" cy="10.3" r="10.2" fill="url(#a3g)"/><circle cx="10.3" cy="10.3" r="10.2" fill="url(#a3b)"/><circle cx="10.3" cy="10.3" r="10.2" fill="url(#a3r)"/><circle cx="10.3" cy="10.3" r="10.2" fill="url(#a3h)"/><ellipse cx="5.8" cy="9.9" rx="3.5" ry="2.25" transform="rotate(38 5.8 9.9)" fill="#14052f"/><ellipse cx="15" cy="9.9" rx="3.3" ry="2.05" transform="rotate(-38 15 9.9)" fill="#14052f"/><ellipse cx="7.7" cy="7.9" rx="0.9" ry="0.6" transform="rotate(38 7.7 7.9)" fill="#fff" opacity="0.85"/><path d="M7.3 14.9Q10.3 17.6 13.2 14.9Q10.3 16 7.3 14.9Z" fill="#4a1788" stroke="#4a1788" stroke-width="0.5" stroke-linejoin="round"/></svg>
<div class="t" style="left:1413.18px;top:109px;font-size:13px;color:#333333;letter-spacing:0.138px;">Done!</div>
<div class="card" style="top:136.3px;height:121.7px"></div>
<div class="t" style="left:1391.52px;top:150px;font-size:11px;color:#1a1a1a;font-weight:700;letter-spacing:-0.109px;">Naming convention v1</div>
<div class="abs" style="left:1391.8px;top:178.55px;width:6.8px;height:6.8px;border-radius:50%;background:#d2d2d2"></div><div class="t" style="left:1402.99px;top:177px;font-size:11px;color:#262626;letter-spacing:0.042px;">Identify values that do not fit the part name</div><div class="t" style="left:1762.60px;top:177px;font-size:11px;color:#bcbcbc;letter-spacing:0.032px;">Done</div>
<div class="abs" style="left:1391.8px;top:206.8px;width:6.8px;height:6.8px;border-radius:50%;background:#d2d2d2"></div><div class="t" style="left:1403.27px;top:206px;font-size:11px;color:#262626;letter-spacing:-0.049px;">remove redundant values from targeting column  in campaign_data</div><div class="t" style="left:1762.60px;top:206px;font-size:11px;color:#bcbcbc;letter-spacing:0.032px;">Done</div>
<div class="abs" style="left:1391.8px;top:235.05px;width:6.8px;height:6.8px;border-radius:50%;background:#d2d2d2"></div><div class="t" style="left:1403.27px;top:234px;font-size:11px;color:#262626;letter-spacing:-0.048px;">remove redundant values from location column in campaign_data</div><div class="t" style="left:1762.60px;top:234px;font-size:11px;color:#bcbcbc;letter-spacing:0.032px;">Done</div>
<svg class="abs" style="left:1382.8px;top:264.7px" width="11.2" height="11.2" viewBox="0 0 11.2 11.2" ><path d="M9.9 3.4A4.6 4.6 0 1 0 10.3 6.6" fill="none" stroke="#c0c0c0" stroke-width="1.05" stroke-linecap="round"/><path d="M10.4 0.9V3.7H7.6" fill="none" stroke="#c0c0c0" stroke-width="1.05" stroke-linecap="round" stroke-linejoin="round"/></svg><svg class="abs" style="left:1406px;top:264.2px" width="12" height="12" viewBox="0 0 12 12" ><g fill="none" stroke="#c0c0c0" stroke-width="1" stroke-linejoin="round" stroke-linecap="round"><path d="M0.6 5.4H3.1V11.2H0.6Z"/><path d="M3.1 5.6L5.6 0.7C6.9 0.7 7.4 1.7 7.1 2.8L6.6 4.6H10.1C11 4.6 11.6 5.4 11.4 6.2L10.4 10.2C10.2 10.8 9.7 11.2 9.1 11.2H3.1"/></g></svg><svg class="abs" style="left:1430.5px;top:264.9px" width="12" height="12" viewBox="0 0 12 12" ><g transform="rotate(180 6 6)"><g fill="none" stroke="#c0c0c0" stroke-width="1" stroke-linejoin="round" stroke-linecap="round"><path d="M0.6 5.4H3.1V11.2H0.6Z"/><path d="M3.1 5.6L5.6 0.7C6.9 0.7 7.4 1.7 7.1 2.8L6.6 4.6H10.1C11 4.6 11.6 5.4 11.4 6.2L10.4 10.2C10.2 10.8 9.7 11.2 9.1 11.2H3.1"/></g></g></svg><div class="t" style="left:1741.51px;top:266px;font-size:11px;color:#c8c8c8;letter-spacing:-0.175px;">Today 23:55</div>
<svg class="abs" style="left:1381.5px;top:295.9px" width="20.8" height="20.8" viewBox="0 0 20.6 20.6" ><defs><clipPath id="v4c"><circle cx="10.3" cy="10.3" r="10.3"/></clipPath><filter id="v4f" x="-10%" y="-10%" width="120%" height="120%"><feGaussianBlur stdDeviation="0.38"/></filter><linearGradient id="v4bg" x1="0" y1="0" x2="1" y2="0"><stop offset="0" stop-color="#86dca6"/><stop offset="0.18" stop-color="#7fcf9c"/><stop offset="0.27" stop-color="#6c7358"/><stop offset="0.66" stop-color="#74775a"/><stop offset="0.8" stop-color="#98987c"/><stop offset="0.9" stop-color="#d8d8cc"/><stop offset="1" stop-color="#b8b8a8"/></linearGradient></defs><g clip-path="url(#v4c)"><g filter="url(#v4f)"><rect x="-2" y="-2" width="24.6" height="24.6" fill="url(#v4bg)"/><rect x="14.2" y="3.5" width="2" height="9" fill="#a8a878" opacity="0.6"/><path d="M4.3 8.5C3.6 2.4 6.8 0.4 9.1 0.5C12 0.4 14.2 2.2 13.5 8.5Z" fill="#33221f"/><path d="M4.9 6.2C4.9 3.5 6.7 2.7 9 2.7C11.5 2.7 13.1 3.6 13 6.4C13 9.8 12.6 11.8 11.4 13.1C10.1 14.4 7.8 14.4 6.6 13.1C5.3 11.7 4.9 9.4 4.9 6.2Z" fill="#d6857b"/><path d="M5.4 10.8C6.4 11.9 11.4 12 12.6 10.8C12.3 13 10.8 14.5 8.9 14.5C7.1 14.5 5.8 13 5.4 10.8Z" fill="#8a4f45" opacity="0.7"/><path d="M5.6 6.4H8.2M9.9 6.4H12.5" stroke="#54302b" stroke-width="0.9" opacity="0.7"/><rect x="7" y="13.2" width="4.4" height="3" fill="#c7776c"/><path d="M6.6 15.2L9.2 16.2L11.8 15.2L12.4 21H6.4Z" fill="#9c9295"/><path d="M-1 16.9L7.8 13.3L6.8 22H-1Z" fill="#e3134c"/><path d="M21.6 16.9L11.2 13L12.2 22H21.6Z" fill="#f0145a"/></g></g></svg>
<div class="bubble" style="top:291.3px;height:30.4px"></div>
<div class="t" style="left:1413.22px;top:301px;font-size:12.5px;color:#2f2a58;letter-spacing:0.071px;">Based on campaign name update targeting for campaigns in the list</div>
<svg class="abs" style="left:1381.6px;top:340.5px" width="20.6" height="20.6" viewBox="0 0 20.6 20.6" ><defs><linearGradient id="a5g" x1="0" y1="0.35" x2="1" y2="0.55"><stop offset="0" stop-color="#b565e8"/><stop offset="0.4" stop-color="#9b55df"/><stop offset="0.56" stop-color="#6846d4"/><stop offset="0.82" stop-color="#5a4bd8"/><stop offset="1" stop-color="#8585f2"/></linearGradient><radialGradient id="a5h" cx="0.3" cy="0.2" r="0.32"><stop offset="0" stop-color="#fff" stop-opacity="0.75"/><stop offset="1" stop-color="#fff" stop-opacity="0"/></radialGradient><radialGradient id="a5r" cx="0.93" cy="0.58" r="0.28"><stop offset="0" stop-color="#b0b0ff" stop-opacity="0.9"/><stop offset="1" stop-color="#9a9aff" stop-opacity="0"/></radialGradient><radialGradient id="a5b" cx="0.45" cy="1" r="0.5"><stop offset="0" stop-color="#8a4fe0" stop-opacity="0.9"/><stop offset="1" stop-color="#8a4fe0" stop-opacity="0"/></radialGradient></defs><circle cx="10.3" cy="10.3" r="10.2" fill="url(#a5g)"/><circle cx="10.3" cy="10.3" r="10.2" fill="url(#a5b)"/><circle cx="10.3" cy="10.3" r="10.2" fill="url(#a5r)"/><circle cx="10.3" cy="10.3" r="10.2" fill="url(#a5h)"/><ellipse cx="5.8" cy="9.9" rx="3.5" ry="2.25" transform="rotate(38 5.8 9.9)" fill="#14052f"/><ellipse cx="15" cy="9.9" rx="3.3" ry="2.05" transform="rotate(-38 15 9.9)" fill="#14052f"/><ellipse cx="7.7" cy="7.9" rx="0.9" ry="0.6" transform="rotate(38 7.7 7.9)" fill="#fff" opacity="0.85"/><path d="M7.3 14.9Q10.3 17.6 13.2 14.9Q10.3 16 7.3 14.9Z" fill="#4a1788" stroke="#4a1788" stroke-width="0.5" stroke-linejoin="round"/></svg>
<div class="t" style="left:1413.22px;top:346px;font-size:12.5px;color:#2f2a58;letter-spacing:0.054px;">Let me check which campaigns need to be updated.</div>
<div class="card" style="top:372px;height:121px"></div>
<div class="t" style="left:1392.00px;top:386px;font-size:10.5px;color:#1a1a1a;font-weight:700;letter-spacing:-0.109px;">Analysis</div>
<div class="abs" style="left:1391.8px;top:414.05px;width:6.8px;height:6.8px;border-radius:50%;background:#d2d2d2"></div><div class="t" style="left:1403.45px;top:413px;font-size:11px;color:#262626;letter-spacing:-0.176px;">Check targeting values</div><div class="t" style="left:1762.60px;top:413px;font-size:11px;color:#bcbcbc;letter-spacing:0.032px;">Done</div>
<div class="abs" style="left:1391.8px;top:442.3px;width:6.8px;height:6.8px;border-radius:50%;background:#d2d2d2"></div><div class="t" style="left:1403.45px;top:441px;font-size:11px;color:#262626;letter-spacing:-0.266px;">Check camapign_name</div><div class="t" style="left:1762.60px;top:441px;font-size:11px;color:#bcbcbc;letter-spacing:0.032px;">Done</div>
<div class="abs" style="left:1391.8px;top:470.55px;width:6.8px;height:6.8px;border-radius:50%;background:#d2d2d2"></div><div class="t" style="left:1403.10px;top:469px;font-size:11px;color:#262626;letter-spacing:-0.052px;">Define campaigns that need targeting updates</div><div class="t" style="left:1762.60px;top:469px;font-size:11px;color:#bcbcbc;letter-spacing:0.032px;">Done</div>
<div class="t" style="left:1413.10px;top:511px;font-size:12.5px;color:#333333;letter-spacing:0.113px;">I found 2 campaigns that need targeting updates.</div>
<div class="abs" style="left:1421.3px;top:535.5px;width:3px;height:3px;border-radius:50%;background:#333"></div>
<div class="t" style="left:1431.67px;top:531px;font-size:12.5px;color:#333333;letter-spacing:0.103px;">retargeting-terminus_visitors-usa</div>
<div class="abs" style="left:1421.3px;top:556px;width:3px;height:3px;border-radius:50%;background:#333"></div>
<div class="t" style="left:1432.33px;top:552px;font-size:12.5px;color:#333333;letter-spacing:-0.037px;">fb-remarketing_visit_site-usa-2022-05-28</div>
<div class="t" style="left:1414.20px;top:593px;font-size:12.5px;color:#333333;letter-spacing:0.067px;">Would you like to update the targeting for these campaigns?</div>
<svg class="abs" style="left:1382.8px;top:620.2px" width="11.2" height="11.2" viewBox="0 0 11.2 11.2" ><path d="M9.9 3.4A4.6 4.6 0 1 0 10.3 6.6" fill="none" stroke="#c0c0c0" stroke-width="1.05" stroke-linecap="round"/><path d="M10.4 0.9V3.7H7.6" fill="none" stroke="#c0c0c0" stroke-width="1.05" stroke-linecap="round" stroke-linejoin="round"/></svg><svg class="abs" style="left:1406px;top:619.7px" width="12" height="12" viewBox="0 0 12 12" ><g fill="none" stroke="#c0c0c0" stroke-width="1" stroke-linejoin="round" stroke-linecap="round"><path d="M0.6 5.4H3.1V11.2H0.6Z"/><path d="M3.1 5.6L5.6 0.7C6.9 0.7 7.4 1.7 7.1 2.8L6.6 4.6H10.1C11 4.6 11.6 5.4 11.4 6.2L10.4 10.2C10.2 10.8 9.7 11.2 9.1 11.2H3.1"/></g></svg><svg class="abs" style="left:1430.5px;top:620.4px" width="12" height="12" viewBox="0 0 12 12" ><g transform="rotate(180 6 6)"><g fill="none" stroke="#c0c0c0" stroke-width="1" stroke-linejoin="round" stroke-linecap="round"><path d="M0.6 5.4H3.1V11.2H0.6Z"/><path d="M3.1 5.6L5.6 0.7C6.9 0.7 7.4 1.7 7.1 2.8L6.6 4.6H10.1C11 4.6 11.6 5.4 11.4 6.2L10.4 10.2C10.2 10.8 9.7 11.2 9.1 11.2H3.1"/></g></g></svg><div class="t" style="left:1741.51px;top:621px;font-size:11px;color:#c8c8c8;letter-spacing:-0.175px;">Today 23:55</div>
<svg class="abs" style="left:1381.5px;top:651.2px" width="20.8" height="20.8" viewBox="0 0 20.6 20.6" ><defs><clipPath id="v6c"><circle cx="10.3" cy="10.3" r="10.3"/></clipPath><filter id="v6f" x="-10%" y="-10%" width="120%" height="120%"><feGaussianBlur stdDeviation="0.38"/></filter><linearGradient id="v6bg" x1="0" y1="0" x2="1" y2="0"><stop offset="0" stop-color="#86dca6"/><stop offset="0.18" stop-color="#7fcf9c"/><stop offset="0.27" stop-color="#6c7358"/><stop offset="0.66" stop-color="#74775a"/><stop offset="0.8" stop-color="#98987c"/><stop offset="0.9" stop-color="#d8d8cc"/><stop offset="1" stop-color="#b8b8a8"/></linearGradient></defs><g clip-path="url(#v6c)"><g filter="url(#v6f)"><rect x="-2" y="-2" width="24.6" height="24.6" fill="url(#v6bg)"/><rect x="14.2" y="3.5" width="2" height="9" fill="#a8a878" opacity="0.6"/><path d="M4.3 8.5C3.6 2.4 6.8 0.4 9.1 0.5C12 0.4 14.2 2.2 13.5 8.5Z" fill="#33221f"/><path d="M4.9 6.2C4.9 3.5 6.7 2.7 9 2.7C11.5 2.7 13.1 3.6 13 6.4C13 9.8 12.6 11.8 11.4 13.1C10.1 14.4 7.8 14.4 6.6 13.1C5.3 11.7 4.9 9.4 4.9 6.2Z" fill="#d6857b"/><path d="M5.4 10.8C6.4 11.9 11.4 12 12.6 10.8C12.3 13 10.8 14.5 8.9 14.5C7.1 14.5 5.8 13 5.4 10.8Z" fill="#8a4f45" opacity="0.7"/><path d="M5.6 6.4H8.2M9.9 6.4H12.5" stroke="#54302b" stroke-width="0.9" opacity="0.7"/><rect x="7" y="13.2" width="4.4" height="3" fill="#c7776c"/><path d="M6.6 15.2L9.2 16.2L11.8 15.2L12.4 21H6.4Z" fill="#9c9295"/><path d="M-1 16.9L7.8 13.3L6.8 22H-1Z" fill="#e3134c"/><path d="M21.6 16.9L11.2 13L12.2 22H21.6Z" fill="#f0145a"/></g></g></svg>
<div class="bubble" style="top:646.5px;height:30.5px"></div>
<div class="t" style="left:1413.97px;top:657px;font-size:12.5px;color:#2f2a58;letter-spacing:-0.047px;">Yes, please update</div>
<svg class="abs" style="left:1381.6px;top:696.0px" width="20.6" height="20.6" viewBox="0 0 20.6 20.6" ><defs><linearGradient id="a7g" x1="0" y1="0.35" x2="1" y2="0.55"><stop offset="0" stop-color="#b565e8"/><stop offset="0.4" stop-color="#9b55df"/><stop offset="0.56" stop-color="#6846d4"/><stop offset="0.82" stop-color="#5a4bd8"/><stop offset="1" stop-color="#8585f2"/></linearGradient><radialGradient id="a7h" cx="0.3" cy="0.2" r="0.32"><stop offset="0" stop-color="#fff" stop-opacity="0.75"/><stop offset="1" stop-color="#fff" stop-opacity="0"/></radialGradient><radialGradient id="a7r" cx="0.93" cy="0.58" r="0.28"><stop offset="0" stop-color="#b0b0ff" stop-opacity="0.9"/><stop offset="1" stop-color="#9a9aff" stop-opacity="0"/></radialGradient><radialGradient id="a7b" cx="0.45" cy="1" r="0.5"><stop offset="0" stop-color="#8a4fe0" stop-opacity="0.9"/><stop offset="1" stop-color="#8a4fe0" stop-opacity="0"/></radialGradient></defs><circle cx="10.3" cy="10.3" r="10.2" fill="url(#a7g)"/><circle cx="10.3" cy="10.3" r="10.2" fill="url(#a7b)"/><circle cx="10.3" cy="10.3" r="10.2" fill="url(#a7r)"/><circle cx="10.3" cy="10.3" r="10.2" fill="url(#a7h)"/><ellipse cx="5.8" cy="9.9" rx="3.5" ry="2.25" transform="rotate(38 5.8 9.9)" fill="#14052f"/><ellipse cx="15" cy="9.9" rx="3.3" ry="2.05" transform="rotate(-38 15 9.9)" fill="#14052f"/><ellipse cx="7.7" cy="7.9" rx="0.9" ry="0.6" transform="rotate(38 7.7 7.9)" fill="#fff" opacity="0.85"/><path d="M7.3 14.9Q10.3 17.6 13.2 14.9Q10.3 16 7.3 14.9Z" fill="#4a1788" stroke="#4a1788" stroke-width="0.5" stroke-linejoin="round"/></svg>
<div class="t" style="left:1413.18px;top:700px;font-size:13px;color:#2f2a58;letter-spacing:0.138px;">Done!</div>
<div class="card" style="top:727.5px;height:93.2px"></div>
<div class="t" style="left:1391.52px;top:741px;font-size:11px;color:#1a1a1a;font-weight:700;letter-spacing:-0.076px;">Naming convention v2</div>
<div class="abs" style="left:1694.5px;top:737.2px;width:40px;height:17.4px;border:1px solid #dadada;border-radius:3px;background:#fff;box-shadow:0 1px 1px rgba(0,0,0,.05)"></div>
<div class="t" style="left:1700.89px;top:741px;font-size:10.5px;color:#333;letter-spacing:-0.185px;">Reset</div>
<div class="abs" style="left:1741.4px;top:737.1px;width:48.4px;height:17.6px;border:1.5px solid #7a55d4;border-radius:3.5px;background:#fff"></div>
<div class="t" style="left:1747.89px;top:741px;font-size:10.5px;color:#6a3fcf;letter-spacing:-0.120px;">Review</div>
<div class="abs" style="left:1391.8px;top:769.8px;width:6.8px;height:6.8px;border-radius:50%;background:#d2d2d2"></div><div class="t" style="left:1403.15px;top:769px;font-size:11px;color:#262626;letter-spacing:-0.021px;">Update retargeting-terminus_visitors-usa targeting</div><div class="t" style="left:1762.60px;top:769px;font-size:11px;color:#bcbcbc;letter-spacing:0.032px;">Done</div>
<div class="abs" style="left:1391.8px;top:798.05px;width:6.8px;height:6.8px;border-radius:50%;background:#d2d2d2"></div><div class="t" style="left:1403.15px;top:797px;font-size:11px;color:#262626;letter-spacing:-0.105px;">Update fb-remarketing_visit_site-usa-2022-05-28 targeting</div><div class="t" style="left:1762.60px;top:797px;font-size:11px;color:#bcbcbc;letter-spacing:0.032px;">Done</div>
<svg class="abs" style="left:1382.5px;top:847.8px" width="12.4" height="12.4" viewBox="0 0 12.4 12.4" ><path d="M5.4 1.9C5.8 5.4 6.9 6.6 10.4 7.1C6.9 7.6 5.8 8.8 5.4 12.3C5 8.8 3.9 7.6 0.4 7.1C3.9 6.6 5 5.4 5.4 1.9Z" fill="none" stroke="#5f5f5f" stroke-width="0.9" stroke-linejoin="round"/><path d="M10.3 0.3V3.1M8.9 1.7H11.7" stroke="#5f5f5f" stroke-width="0.85" fill="none" stroke-linecap="round"/></svg>
<div class="t" style="left:1400.01px;top:849px;font-size:11px;color:#8c8c8c;letter-spacing:-0.265px;">Suggestions</div>
<svg class="abs" style="left:1465.4px;top:853.2px" width="6.4" height="4.4" viewBox="0 0 6.4 4.4" ><path d="M0.5 0.5L3.2 3.6L5.9 0.5" fill="none" stroke="#8c8c8c" stroke-width="1" stroke-linecap="round" stroke-linejoin="round"/></svg>
<div class="card" style="top:871px;height:40px"></div>
<div class="t" style="left:1392.72px;top:882px;font-size:12.5px;color:#c4c4c4;letter-spacing:-0.089px;">Ask a question</div>
</body>
</html>
